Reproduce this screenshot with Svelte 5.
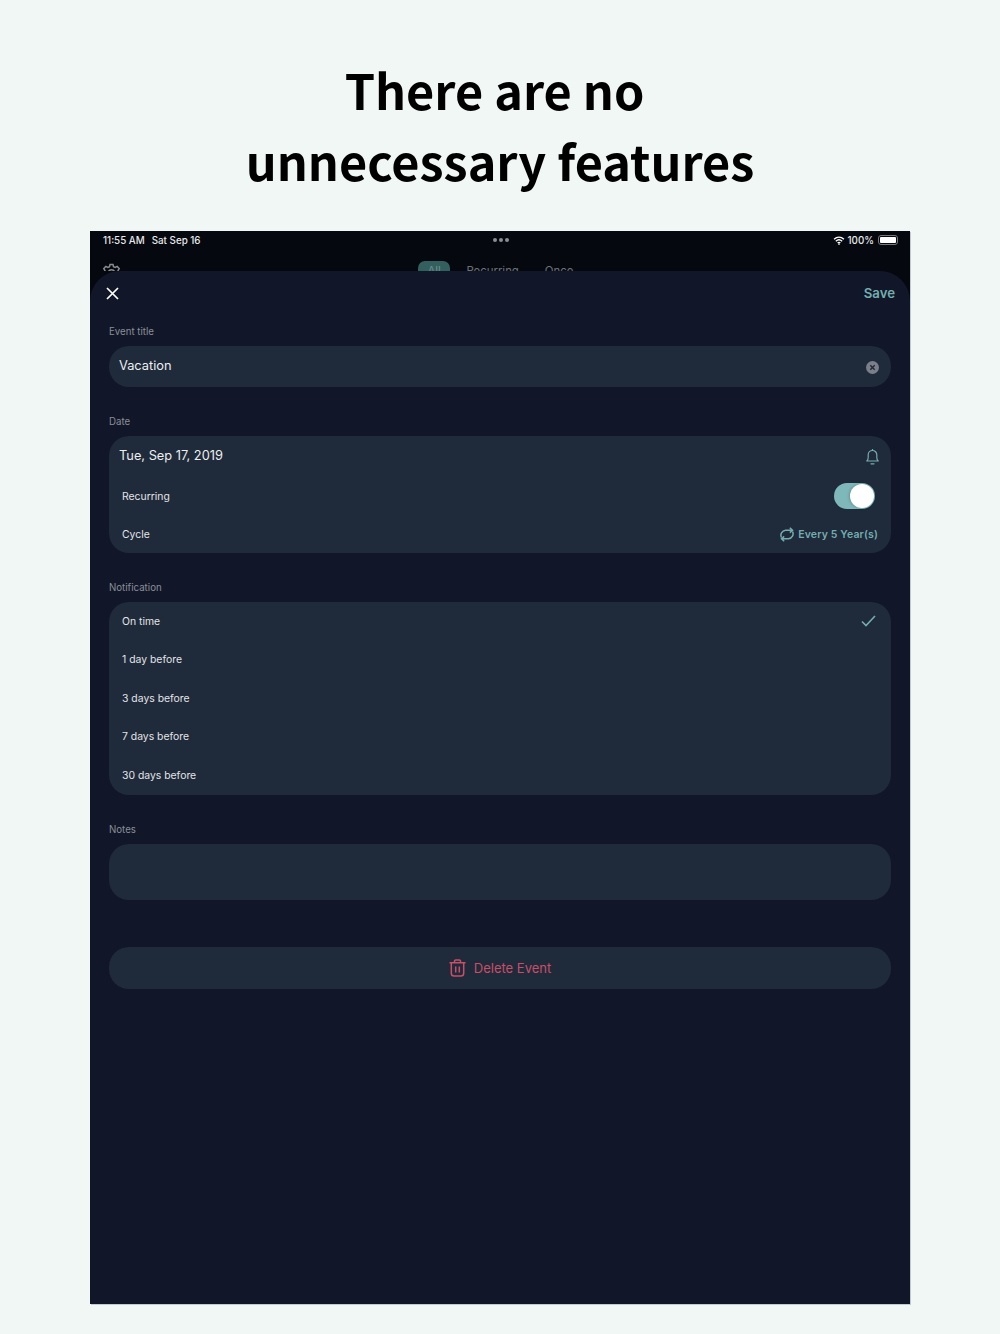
<script>
  const options = ['On time', '1 day before', '3 days before', '7 days before', '30 days before'];
</script>

<div class="page">
  <h1><span class="line-one">There are no</span><br />unnecessary features</h1>

  <div class="screen">
    <div class="behind">
      <div class="status">
        <div class="status-left"><span>11:55 AM</span><span>Sat Sep 16</span></div>
        <div class="dots"><i></i><i></i><i></i></div>
        <div class="status-right">
          <svg width="12" height="9" viewBox="0 0 13 10" fill="none" stroke="#fff" stroke-width="1.5">
            <path d="M1 3.600C4.300.6 8.700.6 12 3.600" />
            <path d="M3 5.700c2.100-1.900 4.900-1.900 7 0" />
            <path d="M5 7.700c.9-.8 2.100-.8 3 0" />
            <circle cx="6.500" cy="9" r=".6" fill="#fff" stroke-width=".6" />
          </svg>
          <span>100%</span>
          <div class="battery"><b></b></div>
        </div>
      </div>
      <div class="tabs-row">
        <svg class="gear" width="19" height="19" viewBox="0 0 19 19" fill="none" stroke="#8a8c90" stroke-width="1.500">
          <path d="M8 1.500h3l.5 2.200 1.700.8 2-1.100 2 2.200-1.200 1.900.7 1.700 2 .6v3l-2 .6-.7 1.700 1.200 1.900-2 2-2-1.100-1.700.7-.5 2.200H8l-.5-2.200-1.700-.7-2 1.100-2-2 1.200-1.900-.7-1.700-2-.6v-3l2-.6.7-1.700L1.800 5.600l2-2.200 2 1.100 1.700-.8z" />
          <circle cx="9.500" cy="10" r="3.200" />
        </svg>
        <div class="tabs">
          <span class="tab active">All</span>
          <span class="tab">Recurring</span>
          <span class="tab">Once</span>
        </div>
      </div>
    </div>

    <div class="sheet">
      <div class="sheet-head">
        <svg width="13" height="13" viewBox="0 0 13 13" fill="none" stroke="#fff" stroke-width="1.700">
          <path d="M1 1l11 11M12 1L1 12" />
        </svg>
        <span class="save">Save</span>
      </div>

      <div class="label first">Event title</div>
      <div class="card input">
        <span class="big">Vacation</span>
        <svg width="13" height="13" viewBox="0 0 13 13">
          <circle cx="6.500" cy="6.500" r="6.500" fill="#7a7f8a" />
          <path d="M4.300 4.300l4.400 4.400M8.700 4.300L4.300 8.700" stroke="#20293a" stroke-width="1.400" />
        </svg>
      </div>

      <div class="label">Date</div>
      <div class="card date">
        <div class="date-row">
          <span class="big">Tue, Sep 17, 2019</span>
          <svg width="13" height="16" viewBox="0 0 13 16" fill="none" stroke="#74adb0" stroke-width="1.200">
            <path d="M.8 12c1-.9 1.400-2 1.400-3.400V5.800a4.300 4.300 0 0 1 8.600 0v2.800c0 1.400.4 2.500 1.400 3.400z" stroke-linejoin="round" />
            <path d="M5 14.800h3M6.500 1.500V.5" stroke-linecap="round" />
          </svg>
        </div>
        <div class="row">
          <span>Recurring</span>
          <div class="toggle"><b></b></div>
        </div>
        <div class="row">
          <span>Cycle</span>
          <div class="cycle">
            <svg width="14" height="15" viewBox="0 0 14 15" fill="none" stroke="#74adb0" stroke-width="1.500">
              <path d="M1.500 10.500A5 5 0 0 1 5.500 3.200H12M9.800.8l2.700 2.400-2.700 2.400" />
              <path d="M12.500 4.500A5 5 0 0 1 8.500 11.800H2M4.200 9.400 1.500 11.800l2.700 2.400" />
            </svg>
            <span>Every 5 Year(s)</span>
          </div>
        </div>
      </div>

      <div class="label">Notification</div>
      <div class="card list">
        {#each options as opt, i}
          <div class="row">
            <span>{opt}</span>
            {#if i === 0}
              <svg width="15" height="12" viewBox="0 0 15 12" fill="none" stroke="#74adb0" stroke-width="1.600">
                <path d="M1 6.500l4 4L14 1" />
              </svg>
            {/if}
          </div>
        {/each}
      </div>

      <div class="label">Notes</div>
      <div class="card notes"></div>

      <div class="card delete">
        <svg width="17" height="18" viewBox="0 0 17 18" fill="none" stroke="#c94f68" stroke-width="1.500">
          <path d="M.5 3.700h16M5.500 3.700V2.300A1.300 1.300 0 0 1 6.800 1h3.400a1.300 1.300 0 0 1 1.300 1.300v1.400M2.300 3.700v10.500A2.800 2.800 0 0 0 5.100 17h6.800a2.800 2.800 0 0 0 2.800-2.800V3.700M6.700 7.500v6M10.300 7.500v6" />
        </svg>
        <span>Delete Event</span>
      </div>
    </div>
  </div>
</div>

<style>
  :global(body) {
    margin: 0;
    background: #f1f7f4;
  }

  .page {
    width: 1000px;
    height: 1334px;
    padding: 54px 90px 30px;
    box-sizing: border-box;
    background: #f1f7f4;
    font-family: Inter, "Liberation Sans", sans-serif;
    overflow: hidden;
  }

  h1 {
    margin: 0 -60px 35px;
    text-align: center;
    font-family: "Noto Sans CJK SC", "Noto Sans", sans-serif;
    font-size: 48.600px;
    line-height: 71px;
    font-weight: 700;
    color: #000;
  }

  .line-one {
    padding-right: 11px;
  }

  .screen {
    height: 1073px;
    background: #05080f;
    display: flex;
    flex-direction: column;
    box-shadow: 1px 1px 0 rgba(125, 135, 160, 0.4);
  }

  .behind {
    height: 40px;
    flex: none;
    overflow: hidden;
  }

  .status {
    height: 18px;
    padding: 0 12px 0 13px;
    display: flex;
    align-items: center;
    justify-content: space-between;
    font-size: 9.800px;
    font-weight: 500;
    color: #e8e9ea;
  }

  .status-left {
    display: flex;
    gap: 7px;
    width: 200px;
  }

  .status-right {
    width: 200px;
    display: flex;
    justify-content: flex-end;
    align-items: center;
    gap: 4px;
  }

  .status-right svg {
    margin-right: -1px;
  }

  .dots {
    display: flex;
    gap: 2px;
  }

  .dots i {
    width: 4px;
    height: 4px;
    border-radius: 50%;
    background: #8b8e94;
  }

  .battery {
    width: 20px;
    height: 10px;
    border: 1px solid #777;
    border-radius: 3px;
    padding: 1px;
    box-sizing: border-box;
  }

  .battery b {
    display: block;
    height: 100%;
    background: #fff;
    border-radius: 1px;
  }

  .tabs-row {
    position: relative;
    height: 40px;
    padding-top: 12px;
  }

  .gear {
    position: absolute;
    left: 12px;
    top: 14px;
  }

  .tabs {
    display: flex;
    align-items: flex-start;
    padding-left: 328px;
    font-size: 11.400px;
    color: #6d7176;
  }

  .tab {
    padding-top: 3px;
    height: 26px;
    box-sizing: border-box;
    margin-left: 26px;
  }

  .tab.active {
    padding: 3px 9.500px 0;
    background: #33605e;
    border-radius: 7px;
    color: #6d8f8d;
    margin-left: 0;
  }

  .tab.active + .tab {
    margin-left: 16px;
  }

  .sheet {
    flex: 1;
    background: #111728;
    border-radius: 30px 30px 0 0;
    padding: 0 19px;
  }

  .sheet-head {
    height: 45px;
    display: flex;
    align-items: center;
    justify-content: space-between;
    margin: 0 -4px 0 -3px;
  }

  .save {
    color: #74adb0;
    font-size: 13.200px;
    font-weight: 600;
    margin-top: -1px;
  }

  .label {
    font-size: 9.700px;
    line-height: 14px;
    color: #8a8e98;
    margin: 28px 0 7px;
  }

  .label.first {
    margin-top: 9px;
  }

  .card {
    background: #1f2a3a;
    border-radius: 20px;
    color: #e2e4e7;
  }

  .big {
    font-size: 12.800px;
    color: #eceef0;
  }

  .input {
    height: 41px;
    padding: 0 12px 2px 10px;
    box-sizing: border-box;
    display: flex;
    align-items: center;
    justify-content: space-between;
  }

  .input svg {
    margin-top: 3px;
  }

  .date {
    height: 117px;
    padding: 0 13px 0 10px;
    box-sizing: border-box;
  }

  .date-row {
    height: 41px;
    display: flex;
    align-items: center;
    justify-content: space-between;
  }

  .date-row span {
    margin-top: -2px;
  }

  .date-row svg {
    margin-right: -1px;
  }

  .date .row {
    height: 38px;
  }

  .row {
    height: 38.500px;
    display: flex;
    align-items: center;
    justify-content: space-between;
    padding-left: 3px;
    font-size: 10.400px;
  }

  .toggle {
    width: 41px;
    height: 26px;
    border-radius: 13px;
    background: #7fb8ba;
    position: relative;
    margin-right: 3px;
  }

  .toggle b {
    position: absolute;
    right: 1px;
    top: 1px;
    width: 24px;
    height: 24px;
    border-radius: 50%;
    background: #fff;
    box-shadow: -1px 0 3px rgba(0, 0, 0, 0.2);
  }

  .cycle {
    display: flex;
    align-items: center;
    gap: 4px;
    color: #74adb0;
    font-weight: 600;
    font-size: 10.500px;
    letter-spacing: 0.150px;
  }

  .list {
    height: 193px;
    padding: 0 15px 0 10px;
    box-sizing: border-box;
  }

  .notes {
    height: 56px;
  }

  .delete {
    height: 42px;
    margin-top: 47px;
    display: flex;
    align-items: center;
    justify-content: center;
    gap: 8px;
    color: #c94f68;
    font-size: 13px;
  }
</style>
